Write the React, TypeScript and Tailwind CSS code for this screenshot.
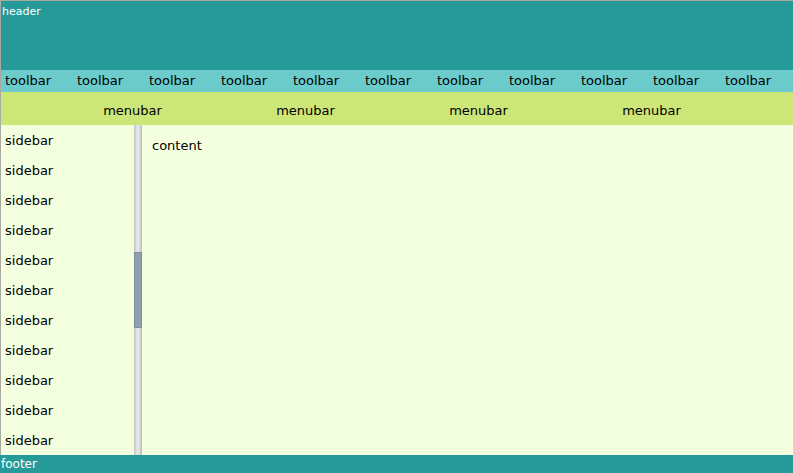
const toolbarItems = Array.from({ length: 11 }, () => "toolbar");
const menubarItems = Array.from({ length: 4 }, () => "menubar");
const sidebarItems = Array.from({ length: 11 }, () => "sidebar");

export default function App() {
  return (
    <div className="w-[793px] h-[473px] overflow-hidden flex flex-col text-black font-['DejaVu_Sans',sans-serif]">
      <div className="flex flex-col flex-1 min-h-0 border-t border-l border-[#a9a9a0]">
        <header className="h-[69px] bg-[#269a98] text-white text-[11px] leading-none pl-[1px] pt-[5px]">header</header>

        <div className="h-[22px] bg-[#6ccccc] flex items-center text-[13px]">
          {toolbarItems.map((t, i) => (
            <div key={i} className="w-[72px] shrink-0 pl-[4px]">
              {t}
            </div>
          ))}
        </div>

        <nav className="h-[33px] bg-[#cce677] flex items-center pl-[45px] pt-[4px] text-[13px]">
          {menubarItems.map((m, i) => (
            <div key={i} className="w-[173px] shrink-0 text-center">
              {m}
            </div>
          ))}
        </nav>

        <div className="flex flex-1 min-h-0 bg-[#f4ffe0]">
          <aside className="w-[133px] shrink-0 overflow-hidden pt-[1px] text-[13px]">
            {sidebarItems.map((s, i) => (
              <div key={i} className="h-[30px] flex items-center pl-[4px]">
                {s}
              </div>
            ))}
          </aside>

          {/* fake scrollbar for the sidebar */}
          <div className="w-[8px] shrink-0 relative bg-gradient-to-r from-[#c4c4c4] via-[#ececec] to-[#bdbdbd]">
            <div className="absolute left-0 right-0 top-[127px] h-[76px] bg-[#8fa1ae] border border-[#7d8d99]" />
          </div>

          <main className="flex-1 pl-[10px] pt-[11px] text-[13px]">content</main>
        </div>
      </div>

      <footer className="h-[18px] shrink-0 bg-[#269a98] text-white text-[12px] leading-[18px] pl-[1px]">footer</footer>
    </div>
  );
}
